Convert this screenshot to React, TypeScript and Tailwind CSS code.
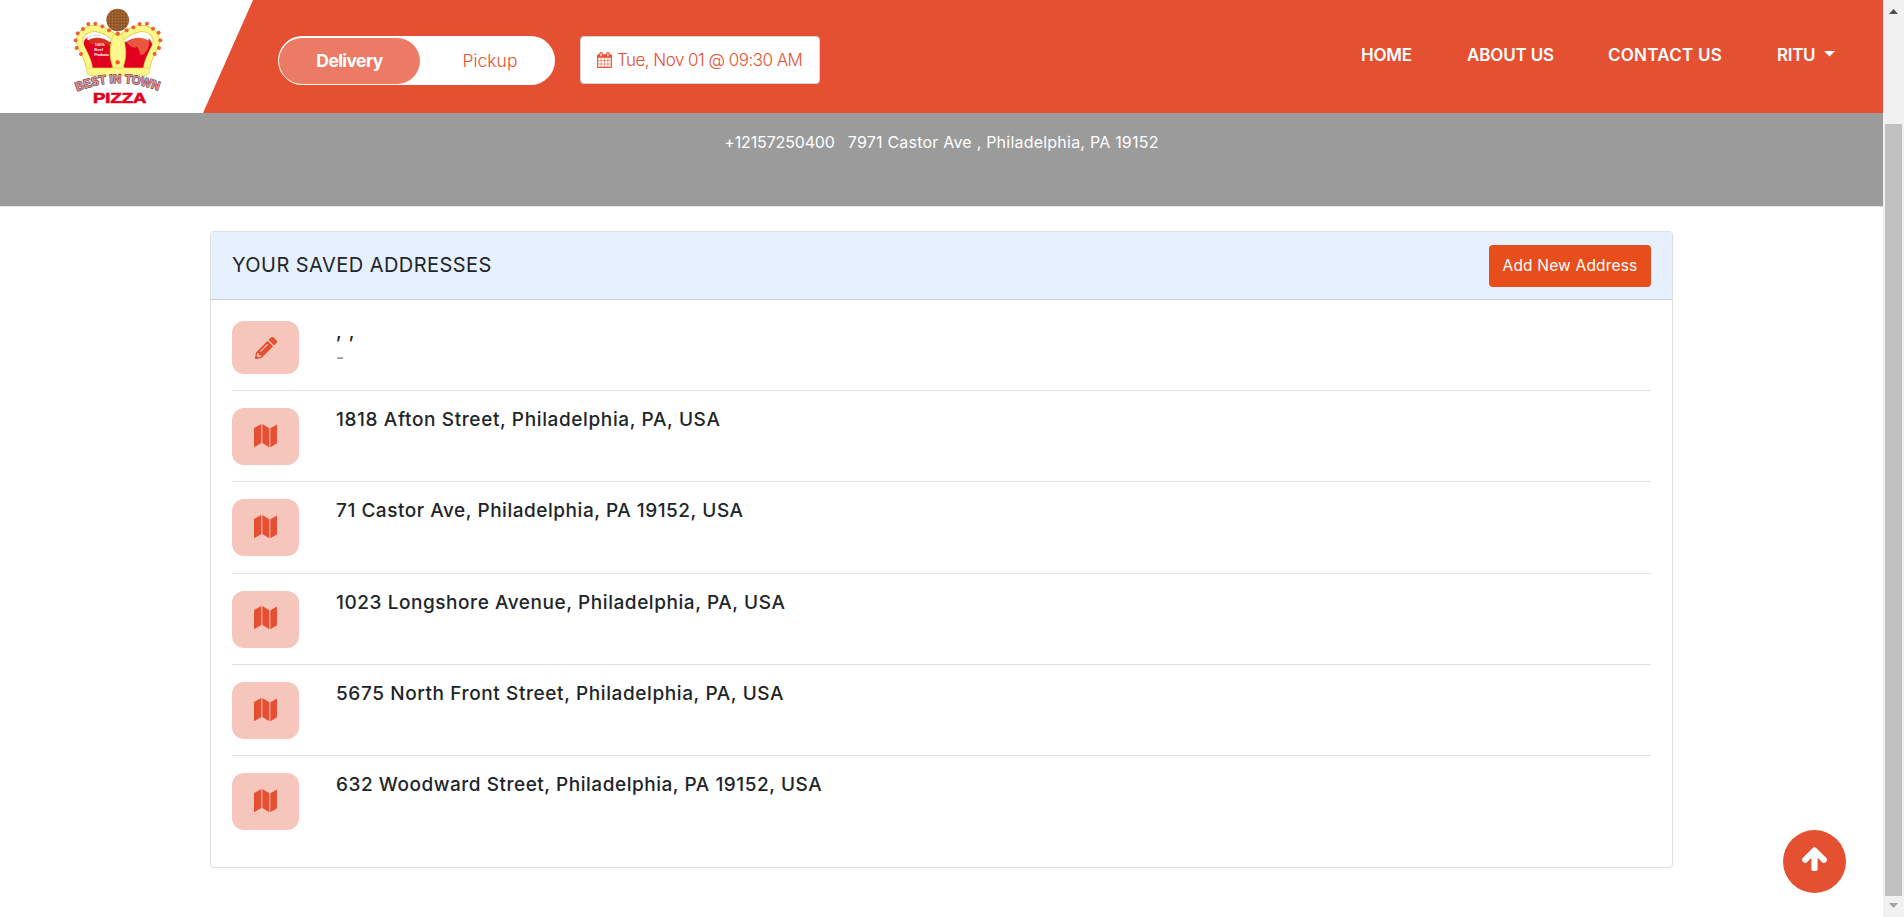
import type { ReactNode } from 'react';
import { FaPencilAlt } from 'react-icons/fa';

const addresses = [
  { text: '1818 Afton Street, Philadelphia, PA, USA', spacing: 'tracking-[0.62px]' },
  { text: '71 Castor Ave, Philadelphia, PA 19152, USA', spacing: 'tracking-[0.53px]' },
  { text: '1023 Longshore Avenue, Philadelphia, PA, USA', spacing: 'tracking-[0.56px]' },
  { text: '5675 North Front Street, Philadelphia, PA, USA', spacing: 'tracking-[0.6px]' },
  { text: '632 Woodward Street, Philadelphia, PA 19152, USA', spacing: 'tracking-[0.53px]' },
];

const jewels = [
  [45, 75], [61, 60], [82, 59], [103, 67], [123, 79],
  [176, 79], [196, 70], [215, 60], [237, 59], [255, 74], [272, 86], [277, 109], [273, 132], [260, 150],
  [39, 150], [29, 88], [23, 109], [26, 132],
];

function Logo() {
  return (
    <svg viewBox="0 0 300 306" className="h-[102px] w-[100px]" aria-label="Best in Town Pizza">
      <defs>
        <pattern id="crust" width="9" height="9" patternUnits="userSpaceOnUse">
          <rect width="9" height="9" fill="#87461a" />
          <path d="M1 2h4v2H1zM6 5h2v3H6zM2 7h3v1H2zM6 1h2v2H6z" fill="#d29a60" />
        </pattern>
        <path id="ribbon" d="M27 262 Q150 212 275 261" />
      </defs>
      <path d="M54 190 C50 150 38 118 54 103 C74 90 108 92 130 113 L136 190 C110 200 75 200 54 190Z" fill="#e2001f" />
      <path d="M244 190 C250 150 262 128 245 106 C225 92 195 100 170 113 L166 190 C190 200 225 200 244 190Z" fill="#e2001f" />
      <path d="M60 108 C80 95 108 98 130 118 L126 130 C106 110 84 116 72 124 C66 118 64 112 60 108Z" fill="#d3321f" />
      <path d="M177 116 C200 96 232 98 245 108 C244 124 238 148 220 154 C212 146 216 136 206 128 C196 136 186 124 177 116Z" fill="#ea5640" />
      <path d="M64 194 C62 150 18 120 42 90 C66 62 108 72 140 102" fill="none" stroke="#d6ca2a" strokeWidth="21" />
      <path d="M64 194 C62 150 18 120 42 90 C66 62 108 72 140 102" fill="none" stroke="#fff68c" strokeWidth="17" />
      <path d="M236 194 C238 150 282 120 258 90 C234 62 192 72 160 102" fill="none" stroke="#d6ca2a" strokeWidth="21" />
      <path d="M236 194 C238 150 282 120 258 90 C234 62 192 72 160 102" fill="none" stroke="#fff68c" strokeWidth="17" />
      <path d="M58 106 C74 94 104 94 128 112 M242 106 C226 94 196 94 172 112" fill="none" stroke="#fff" strokeWidth="7" />
      <path d="M136 92 C122 130 122 170 142 204 L158 204 C178 170 177 130 162 92Z" fill="#fff68c" stroke="#e0cf2b" strokeWidth="2" />
      <path d="M62 192 H238 C248 196 246 212 236 214 H66 C54 212 52 196 62 192Z" fill="#fff68c" stroke="#e0d238" strokeWidth="2" />
      {jewels.map(([x, y]) => (
        <circle key={`${x}-${y}`} cx={x} cy={y} r="5" fill="#ee6a24" stroke="#d93a1c" strokeWidth="1.5" />
      ))}
      <circle cx="149" cy="89" r="6" fill="#f0651f" stroke="#c83b1c" />
      <circle cx="149" cy="175" r="6" fill="#f0651f" stroke="#c83b1c" />
      <circle cx="149" cy="48" r="34" fill="url(#crust)" />
      <g fill="#fff" fontFamily="Liberation Sans, sans-serif" fontSize="12" fontWeight="700">
        <text x="80" y="126">100%</text>
        <text x="79" y="140">Beef</text>
        <text x="79" y="155" textLength="44">Products</text>
      </g>
      <text fontFamily="Liberation Sans, sans-serif" fontSize="37" fontWeight="700" fill="#ee8a92" stroke="#444" strokeWidth="3.5" className="[paint-order:stroke]">
        <textPath href="#ribbon" textLength="250" lengthAdjust="spacingAndGlyphs">BEST IN TOWN</textPath>
      </text>
      <text x="75" y="298" fontFamily="Liberation Sans, sans-serif" fontSize="43" fontWeight="700" fill="#e2001f" stroke="#e2001f" strokeWidth="2" textLength="160" lengthAdjust="spacingAndGlyphs">
        PIZZA
      </text>
    </svg>
  );
}

function CalendarIcon() {
  return (
    <svg viewBox="64 0 1664 1792" className="h-4 w-[15px] fill-[#e55032]">
      <path d="M192 1664h288v-288h-288v288zm352 0h320v-288h-320v288zm-352-352h288v-320h-288v320zm352 0h320v-320h-320v320zm-352-384h288v-288h-288v288zm736 736h320v-288h-320v288zm-384-736h320v-288h-320v288zm768 736h288v-288h-288v288zm-384-352h320v-320h-320v320zm-352-864v-288q0-13-9.5-22.5t-22.5-9.5h-64q-13 0-22.5 9.5t-9.5 22.5v288q0 13 9.5 22.5t22.5 9.5h64q13 0 22.5-9.5t9.5-22.5zm736 864h288v-320h-288v320zm-384-384h320v-288h-320v288zm384 0h288v-288h-288v288zm32-480v-288q0-13-9.5-22.5t-22.5-9.5h-64q-13 0-22.5 9.5t-9.5 22.5v288q0 13 9.5 22.5t22.5 9.5h64q13 0 22.5-9.5t9.5-22.5zm384-64v1280q0 52-38 90t-90 38h-1408q-52 0-90-38t-38-90v-1280q0-52 38-90t90-38h128v-96q0-66 47-113t113-47h64q66 0 113 47t47 113v96h384v-96q0-66 47-113t113-47h64q66 0 113 47t47 113v96h128q52 0 90 38t38 90z" />
    </svg>
  );
}

function MapIcon() {
  return (
    <svg viewBox="0 0 71 70" className="-mt-0.5 h-[23.3px] w-[23.7px] fill-[#e55032]">
      <path d="M0 12 22 0v57L0 70zM25 0l21 13v57L25 57zM49 13 71 0v57L49 70z" />
    </svg>
  );
}

function ArrowUpIcon() {
  return (
    <svg viewBox="0 0 1792 1792" className="h-[29px] w-[29px] fill-white">
      <path d="M1675 971q0 51-37 90l-75 75q-38 38-91 38-54 0-90-38l-294-293v704q0 52-37.5 84.5t-90.5 32.5h-128q-53 0-90.5-32.5t-37.5-84.5v-704l-294 293q-36 38-90 38t-90-38l-75-75q-38-38-38-90 0-53 38-91l651-651q35-37 90-37 54 0 91 37l651 651q37 39 37 91z" />
    </svg>
  );
}

function Header() {
  return (
    <header className="flex h-[113px] bg-[#e55032] text-[#e55032]">
      <div className="h-full w-[253px] bg-white pl-[68px] pt-1 [clip-path:polygon(0_0,100%_0,203px_100%,0_100%)]">
        <Logo />
      </div>
      <div className="ml-[25px] mt-9 flex h-[49px] w-[277px] rounded-full bg-white p-px text-[17.5px]">
        <div className="mt-px flex h-[46px] w-[141px] items-center justify-center rounded-full bg-[#ec7b65] font-bold tracking-[-0.6px] text-white">
          Delivery
        </div>
        <div className="flex flex-1 items-center justify-center pl-1.5 pt-0.5 font-light">Pickup</div>
      </div>
      <div className="ml-[25px] mt-9 flex h-12 w-[240px] items-center rounded border border-[#ced4da] bg-white pl-4">
        <CalendarIcon />
        <span className="ml-[5px] whitespace-nowrap pt-0.5 text-[17px] font-light tracking-[-0.53px]">Tue, Nov 01 @ 09:30 AM</span>
      </div>
      <nav className="ml-auto flex h-[112px] items-center pr-12 text-[17px] font-semibold text-white">
        <span className="w-[106px] tracking-[-0.25px]">HOME</span>
        <span className="w-[141px] whitespace-nowrap tracking-[-0.15px]">ABOUT US</span>
        <span className="w-[169px] whitespace-nowrap tracking-[0.25px]">CONTACT US</span>
        <span className="w-[47px] tracking-[-0.3px]">RITU</span>
        <svg viewBox="0 0 10 5" className="-mt-1 h-[5.5px] w-[11px] fill-white">
          <path d="M0 0h10L5 5z" />
        </svg>
      </nav>
    </header>
  );
}

function Row({ icon, children, first }: { icon: ReactNode; children: ReactNode; first?: boolean }) {
  return (
    <div
      className={
        first
          ? 'flex h-[91px] border-b border-[#dfe1e3] pt-[21px]'
          : 'flex h-[91.25px] border-b border-[#dfe1e3] pt-[17px] last:border-b-0'
      }
    >
      <div
        className={
          first
            ? 'flex h-[53px] w-[67px] items-center justify-center rounded-xl bg-[#f6c5bc] text-[#e55032]'
            : 'flex h-[57px] w-[67px] items-center justify-center rounded-xl bg-[#f6c5bc] text-[#e55032]'
        }
      >
        {icon}
      </div>
      <div className="ml-[37px] text-[19px] font-medium leading-6 tracking-[0.5px] text-[#212529]">{children}</div>
    </div>
  );
}

function Scrollbar() {
  return (
    <div className="flex w-[21px] flex-col items-center bg-[#f1f1f1]">
      <svg viewBox="0 0 9 5" className="mt-[9px] h-[5px] w-[9px] fill-[#505050]">
        <path d="M0 5h9L4.500 0z" />
      </svg>
      <div className="mt-[110px] h-[772px] w-[17px] bg-[#c1c1c1]" />
      <svg viewBox="0 0 9 5" className="mt-[7px] h-[5px] w-[9px] fill-[#a3a3a3]">
        <path d="M0 0h9L4.500 5z" />
      </svg>
    </div>
  );
}

export default function App() {
  return (
    <div className="relative flex h-[917px] w-[1904px] overflow-hidden bg-white font-['Inter',sans-serif]">
      <div className="w-[1883px]">
        <Header />
        <div className="flex h-[94px] justify-center gap-[13px] border-b border-[#dee2e6] bg-[#9b9b9b] pt-[17px] text-base leading-6 text-white">
          <span className="tracking-[-0.15px]">+12157250400</span>
          <span className="tracking-[0.22px]">7971 Castor Ave , Philadelphia, PA 19152</span>
        </div>
        <main className="ml-[210px] mt-6 h-[637px] w-[1463px] rounded border border-[#dfdfdf]">
          <div className="flex h-[68px] items-center justify-between border-b border-[#c3cfe0] bg-[#e6f0ff] px-[21px]">
            <h1 className="pb-0.5 text-xl tracking-[0.45px] text-[#212529]">YOUR SAVED ADDRESSES</h1>
            <button className="h-[42px] w-[162px] rounded bg-[#e84e1b] text-[15.5px] tracking-[0.18px] text-white">Add New Address</button>
          </div>
          <div className="mx-[21px]">
            <Row first icon={<FaPencilAlt className="size-[22px]" />}>
              <div className="-mt-px tracking-[1px]">, ,</div>
              <div className="mt-1 text-lg font-medium leading-5 text-[#9a9a9a]">-</div>
            </Row>
            {addresses.map(({ text, spacing }) => (
              <Row key={text} icon={<MapIcon />}>
                <div className={spacing}>{text}</div>
              </Row>
            ))}
          </div>
        </main>
      </div>
      <Scrollbar />
      <button className="absolute left-[1783px] top-[830px] flex size-[63px] items-center justify-center rounded-full bg-[#e55032] pb-1.5">
        <ArrowUpIcon />
      </button>
    </div>
  );
}
